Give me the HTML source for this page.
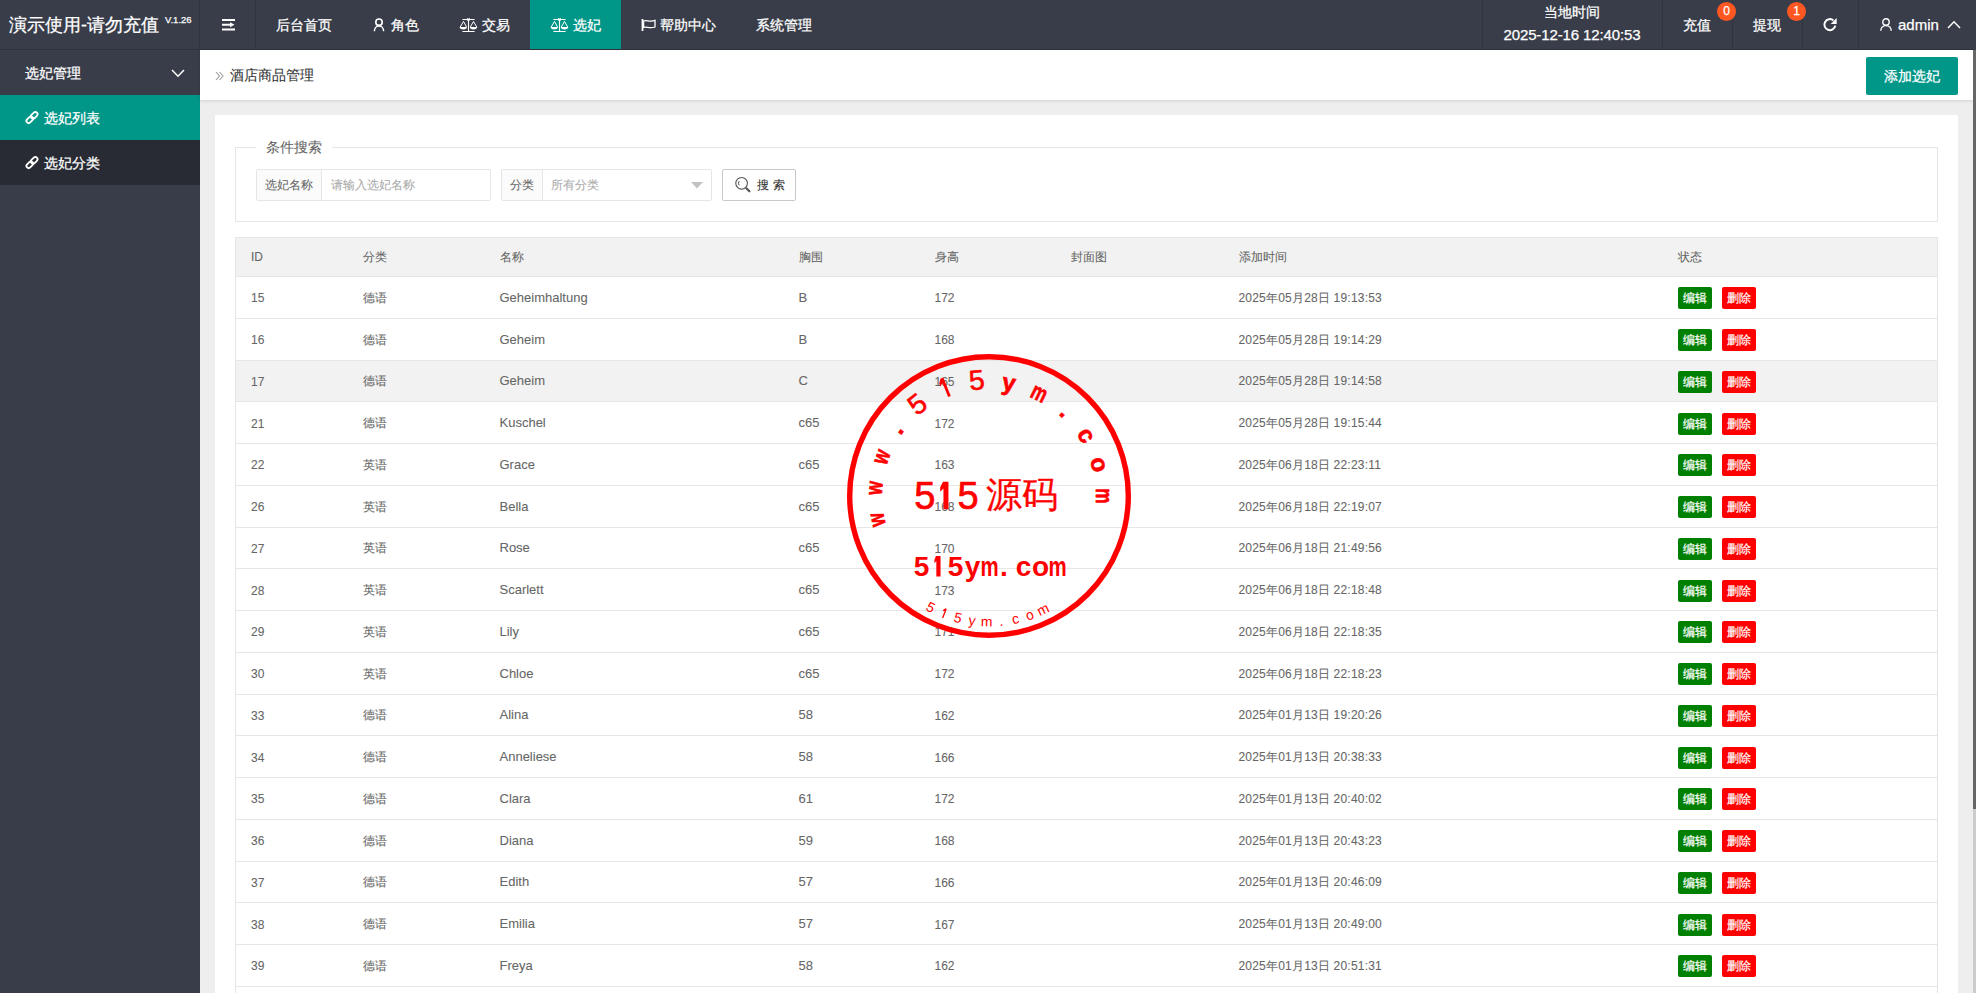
<!DOCTYPE html>
<html><head><meta charset="utf-8">
<style>
*{box-sizing:border-box}
html,body{margin:0;padding:0}
body{width:1976px;height:993px;overflow:hidden;position:relative;background:#eee;font-family:"Liberation Sans",sans-serif;color:#666}
.hdr{position:absolute;left:0;top:0;width:1976px;height:50px;background:#393D49;color:#fff}
.hdr .sep{position:absolute;top:0;width:1px;height:48px;background:#30333d}
.abs{position:absolute;white-space:nowrap}
.nav{position:absolute;top:0;height:50px;line-height:50px;font-size:14px;color:#fff;white-space:nowrap}
.nav svg{position:absolute}
.side{position:absolute;left:0;top:50px;width:200px;height:943px;background:#393D49}
.sitem{position:absolute;left:0;width:200px;height:45px;line-height:45px;font-size:14px;color:#fff}
.bread{position:absolute;left:200px;top:50px;width:1773px;height:50px;background:#fff;box-shadow:0 1px 3px rgba(0,0,0,.12)}
.card{position:absolute;left:215px;top:115px;width:1743px;height:900px;background:#fff}
.sb{position:absolute;left:1973px;top:50px;width:3px;height:943px;background:#ccc}
.sbt{position:absolute;left:1973px;top:50px;width:3px;height:759px;background:#666}
table{border-collapse:collapse;table-layout:fixed;position:absolute;left:235px;top:237px;width:1703px;font-size:12px;color:#666}
th,td{border:1px solid #e6e6e6;border-left:none;border-right:none;padding:0 0 0 15px;text-align:left;font-weight:normal;white-space:nowrap}
th{height:39px;background:#f2f2f2}
td{height:41.75px;padding-top:2px}
tr.hv td{background:#f2f2f2}
th:first-child,td:first-child{border-left:1px solid #e6e6e6;padding-left:15px}
th:last-child,td:last-child{border-right:1px solid #e6e6e6}
.lat{font-size:13px;padding-top:0}
.dt{letter-spacing:0.2px}
.btn{display:inline-block;height:22px;line-height:22px;padding:0 5px;font-size:12px;color:#fff;border-radius:2px;vertical-align:middle}
.bg{background:#008000}
.br{background:#f00;margin-left:10px}
.fs{position:absolute;left:235px;top:147px;width:1703px;height:75px;border:1px solid #e6e6e6}
.ig{position:absolute;top:169px;height:32px;border:1px solid #e6e6e6;border-radius:2px;background:#fff}
.ig .lab{position:absolute;left:0;top:0;height:30px;line-height:30px;text-align:center;background:#fbfbfb;border-right:1px solid #e6e6e6;font-size:12px;color:#666}
.ig .ph{position:absolute;top:0;line-height:30px;font-size:12px;color:#aaa}

.hdr,.side{-webkit-text-stroke:0.25px currentColor}
table,.ig,.sbtn,.lg,.bread{-webkit-text-stroke:0.08px currentColor}
.btn{-webkit-text-stroke:0.2px #fff}
.addb{-webkit-text-stroke:0.25px #fff}
.hline{position:absolute;left:0;top:49px;width:1973px;height:1px;background:#30333c}
</style></head><body>

<div class="hdr">
  <div class="abs" style="left:9px;top:0;height:50px;line-height:50px;font-size:18px;color:#fff">演示使用-请勿充值</div>
  <div class="abs" style="left:165px;top:13.5px;font-size:9.5px;color:#fff">V.1.26</div>
  <div class="sep" style="left:199px"></div>
  <svg class="abs" style="left:221px;top:18px" width="15" height="14" viewBox="0 0 15 14"><path d="M1 2h13M1 6.8h8M1 11.4h13" stroke="#fff" stroke-width="2"/><path d="M9 4.3L13.5 6.8 9 9.3z" fill="#fff"/></svg>
  <div class="sep" style="left:255px"></div>
  <div class="nav" style="left:276px">后台首页</div>
  <div class="nav" style="left:372px"><svg style="left:0;top:17px" width="14" height="16" viewBox="0 0 14 16"><circle cx="7" cy="5.2" r="3.2" fill="none" stroke="#fff" stroke-width="1.6"/><path d="M2.4 14.2c0-3 2-5.2 4.6-5.2s4.6 2.2 4.6 5.2" fill="none" stroke="#fff" stroke-width="1.5"/></svg><span style="margin-left:19px">角色</span></div>
  <div class="nav" style="left:459px"><svg style="left:-0.5px;top:18px" width="19" height="15" viewBox="0 0 19 15"><path d="M3.4 1.5h12.2M3.4 13.5h12.2M9.5 1.5v12" stroke="#fff" stroke-width="1.1" fill="none"/><circle cx="9.5" cy="1.4" r="1.3" fill="none" stroke="#fff" stroke-width="1"/><path d="M4.5 3.4L1.1 9.2M4.5 3.4L7.6 9.2M14.5 3.4L11.2 9.2M14.5 3.4L17.8 9.2" stroke="#fff" stroke-width="1" fill="none"/><path d="M0.7 9.1h7.2a3.6 2.4 0 0 1-7.2 0zM10.9 9.1h7.2a3.6 2.4 0 0 1-7.2 0z" fill="#fff"/></svg><span style="margin-left:23px">交易</span></div>
  <div class="nav" style="left:530px;width:91px;background:#009688"><svg style="left:19.5px;top:18px" width="19" height="15" viewBox="0 0 19 15"><path d="M3.4 1.5h12.2M3.4 13.5h12.2M9.5 1.5v12" stroke="#fff" stroke-width="1.1" fill="none"/><circle cx="9.5" cy="1.4" r="1.3" fill="none" stroke="#fff" stroke-width="1"/><path d="M4.5 3.4L1.1 9.2M4.5 3.4L7.6 9.2M14.5 3.4L11.2 9.2M14.5 3.4L17.8 9.2" stroke="#fff" stroke-width="1" fill="none"/><path d="M0.7 9.1h7.2a3.6 2.4 0 0 1-7.2 0zM10.9 9.1h7.2a3.6 2.4 0 0 1-7.2 0z" fill="#fff"/></svg><span style="margin-left:43px">选妃</span></div>
  <div class="nav" style="left:641px"><svg style="left:0;top:18px" width="16" height="14" viewBox="0 0 16 14"><path d="M1.5 1v12" stroke="#fff" stroke-width="1.8"/><path d="M2.6 3C5.5 1.4 8.5 4.6 14 2.4V9C8.5 11.2 5.5 8 2.6 9.3z" fill="none" stroke="#fff" stroke-width="1.3"/></svg><span style="margin-left:19px">帮助中心</span></div>
  <div class="nav" style="left:756px">系统管理</div>

  <div class="sep" style="left:1482px"></div>
  <div class="abs" style="left:1482px;width:180px;top:3px;text-align:center;font-size:14px;line-height:18px">当地时间</div>
  <div class="abs" style="left:1482px;width:180px;top:26px;text-align:center;font-size:15px;line-height:18px;letter-spacing:-0.12px">2025-12-16 12:40:53</div>
  <div class="sep" style="left:1662px"></div>
  <div class="nav" style="left:1683px">充值</div>
  <div class="sep" style="left:1732px"></div>
  <div class="nav" style="left:1753px">提现</div>
  <div class="sep" style="left:1802px"></div>
  <svg class="abs" style="left:1822px;top:16px" width="16" height="16" viewBox="0 0 16 16"><path d="M13.3 9.6A5.5 5.5 0 1 1 11.4 4.4" fill="none" stroke="#fff" stroke-width="2"/><path d="M8.7 7.9H14.7V2z" fill="#fff"/></svg>
  <div class="sep" style="left:1858px"></div>
  <svg class="abs" style="left:1880px;top:18px" width="12" height="13" viewBox="0 0 12 13"><circle cx="6" cy="4" r="3.2" fill="none" stroke="#fff" stroke-width="1.4"/><path d="M0.8 12.8c0-3 2.2-5.2 5.2-5.2s5.2 2.2 5.2 5.2" fill="none" stroke="#fff" stroke-width="1.4"/></svg>
  <div class="nav" style="left:1898px;font-size:15px">admin</div>
  <svg class="abs" style="left:1947px;top:20px" width="14" height="9" viewBox="0 0 14 9"><path d="M1 8L7 1.8 13 8" fill="none" stroke="#fff" stroke-width="1.5"/></svg>
  <div class="abs" style="left:1717px;top:1.5px;width:19px;height:19px;border-radius:50%;background:#FF5722;color:#fff;font-size:12px;line-height:19px;text-align:center">0</div>
  <div class="abs" style="left:1787px;top:1.5px;width:19px;height:19px;border-radius:50%;background:#FF5722;color:#fff;font-size:12px;line-height:19px;text-align:center">1</div>
</div>

<div class="hline"></div>
<div class="side">
  <div class="sitem" style="top:0"><span style="position:absolute;left:25px;top:0.5px">选妃管理</span><svg class="abs" style="left:171px;top:19px" width="14" height="9" viewBox="0 0 14 9"><path d="M1 1L7 7.2 13 1" fill="none" stroke="#fff" stroke-width="1.5"/></svg></div>
  <div class="sitem" style="top:45px;background:#009688"><svg class="abs" style="left:24px;top:15px" width="16" height="16" viewBox="0 0 16 16"><g fill="none" stroke="#fff" stroke-width="1.8"><rect x="-3.8" y="-2.2" width="7.6" height="4.4" rx="2.2" transform="translate(10.2,5.4) rotate(-45)"/><rect x="-3.8" y="-2.2" width="7.6" height="4.4" rx="2.2" transform="translate(5.8,9.8) rotate(-45)"/></g></svg><span style="position:absolute;left:44px;top:0.5px">选妃列表</span></div>
  <div class="sitem" style="top:90px;background:#282B33"><svg class="abs" style="left:24px;top:15px" width="16" height="16" viewBox="0 0 16 16"><g fill="none" stroke="#fff" stroke-width="1.8"><rect x="-3.8" y="-2.2" width="7.6" height="4.4" rx="2.2" transform="translate(10.2,5.4) rotate(-45)"/><rect x="-3.8" y="-2.2" width="7.6" height="4.4" rx="2.2" transform="translate(5.8,9.8) rotate(-45)"/></g></svg><span style="position:absolute;left:44px;top:0.5px">选妃分类</span></div>
</div>

<div class="bread">
  <svg class="abs" style="left:15px;top:21px" width="9" height="10" viewBox="0 0 9 10"><path d="M1 1l3.5 4L1 9M4.5 1L8 5 4.5 9" fill="none" stroke="#999" stroke-width="1.1"/></svg>
  <div class="abs" style="left:30px;top:0;line-height:50px;font-size:14px;color:#333">酒店商品管理</div>
  <div class="abs addb" style="left:1666px;top:7px;width:92px;height:38px;line-height:38px;text-align:center;background:#009688;color:#fff;font-size:14px;border-radius:2px">添加选妃</div>
</div>


<div class="card"></div>
<div class="fs"></div>
<div class="abs lg" style="left:256px;top:139px;width:76px;height:16px;background:#fff;line-height:16px;font-size:14px;color:#666;padding-left:10px">条件搜索</div>
<div class="ig" style="left:256px;width:235px"><div class="lab" style="width:65px">选妃名称</div><div class="ph" style="left:74px">请输入选妃名称</div></div>
<div class="ig" style="left:501px;width:211px"><div class="lab" style="width:41px">分类</div><div class="ph" style="left:49px">所有分类</div><svg class="abs" style="left:188.5px;top:12px" width="12" height="7" viewBox="0 0 12 7"><path d="M0 0h12L6 6.5z" fill="#c2c2c2"/></svg></div>
<div class="abs sbtn" style="left:722px;top:169px;width:74px;height:32px;border:1px solid #c9c9c9;border-radius:2px;background:#fff"><svg class="abs" style="left:9.5px;top:4.5px" width="20" height="20" viewBox="0 0 20 20"><circle cx="8.6" cy="8.3" r="5.8" fill="none" stroke="#555" stroke-width="1.1"/><path d="M6.2 6.1A3.5 3.5 0 0 0 6.2 10.4" fill="none" stroke="#555" stroke-width="1"/><path d="M13.3 13.3L16.4 16.3" stroke="#555" stroke-width="2.2" stroke-linecap="round"/></svg><div class="abs" style="left:34px;top:0;line-height:30px;font-size:12px;color:#333;letter-spacing:4px">搜索</div></div>
<table><colgroup><col style="width:112px"><col style="width:137px"><col style="width:299px"><col style="width:136px"><col style="width:136px"><col style="width:168px"><col style="width:439px"><col></colgroup>
<tr><th>ID</th><th>分类</th><th>名称</th><th>胸围</th><th>身高</th><th>封面图</th><th>添加时间</th><th>状态</th></tr>
<tr><td>15</td><td>德语</td><td class="lat">Geheimhaltung</td><td class="lat">B</td><td>172</td><td></td><td class="dt">2025年05月28日 19:13:53</td><td><span class="btn bg">编辑</span><span class="btn br">删除</span></td></tr>
<tr><td>16</td><td>德语</td><td class="lat">Geheim</td><td class="lat">B</td><td>168</td><td></td><td class="dt">2025年05月28日 19:14:29</td><td><span class="btn bg">编辑</span><span class="btn br">删除</span></td></tr>
<tr class="hv"><td>17</td><td>德语</td><td class="lat">Geheim</td><td class="lat">C</td><td>165</td><td></td><td class="dt">2025年05月28日 19:14:58</td><td><span class="btn bg">编辑</span><span class="btn br">删除</span></td></tr>
<tr><td>21</td><td>德语</td><td class="lat">Kuschel</td><td class="lat">c65</td><td>172</td><td></td><td class="dt">2025年05月28日 19:15:44</td><td><span class="btn bg">编辑</span><span class="btn br">删除</span></td></tr>
<tr><td>22</td><td>英语</td><td class="lat">Grace</td><td class="lat">c65</td><td>163</td><td></td><td class="dt">2025年06月18日 22:23:11</td><td><span class="btn bg">编辑</span><span class="btn br">删除</span></td></tr>
<tr><td>26</td><td>英语</td><td class="lat">Bella</td><td class="lat">c65</td><td>168</td><td></td><td class="dt">2025年06月18日 22:19:07</td><td><span class="btn bg">编辑</span><span class="btn br">删除</span></td></tr>
<tr><td>27</td><td>英语</td><td class="lat">Rose</td><td class="lat">c65</td><td>170</td><td></td><td class="dt">2025年06月18日 21:49:56</td><td><span class="btn bg">编辑</span><span class="btn br">删除</span></td></tr>
<tr><td>28</td><td>英语</td><td class="lat">Scarlett</td><td class="lat">c65</td><td>173</td><td></td><td class="dt">2025年06月18日 22:18:48</td><td><span class="btn bg">编辑</span><span class="btn br">删除</span></td></tr>
<tr><td>29</td><td>英语</td><td class="lat">Lily</td><td class="lat">c65</td><td>171</td><td></td><td class="dt">2025年06月18日 22:18:35</td><td><span class="btn bg">编辑</span><span class="btn br">删除</span></td></tr>
<tr><td>30</td><td>英语</td><td class="lat">Chloe</td><td class="lat">c65</td><td>172</td><td></td><td class="dt">2025年06月18日 22:18:23</td><td><span class="btn bg">编辑</span><span class="btn br">删除</span></td></tr>
<tr><td>33</td><td>德语</td><td class="lat">Alina</td><td class="lat">58</td><td>162</td><td></td><td class="dt">2025年01月13日 19:20:26</td><td><span class="btn bg">编辑</span><span class="btn br">删除</span></td></tr>
<tr><td>34</td><td>德语</td><td class="lat">Anneliese</td><td class="lat">58</td><td>166</td><td></td><td class="dt">2025年01月13日 20:38:33</td><td><span class="btn bg">编辑</span><span class="btn br">删除</span></td></tr>
<tr><td>35</td><td>德语</td><td class="lat">Clara</td><td class="lat">61</td><td>172</td><td></td><td class="dt">2025年01月13日 20:40:02</td><td><span class="btn bg">编辑</span><span class="btn br">删除</span></td></tr>
<tr><td>36</td><td>德语</td><td class="lat">Diana</td><td class="lat">59</td><td>168</td><td></td><td class="dt">2025年01月13日 20:43:23</td><td><span class="btn bg">编辑</span><span class="btn br">删除</span></td></tr>
<tr><td>37</td><td>德语</td><td class="lat">Edith</td><td class="lat">57</td><td>166</td><td></td><td class="dt">2025年01月13日 20:46:09</td><td><span class="btn bg">编辑</span><span class="btn br">删除</span></td></tr>
<tr><td>38</td><td>德语</td><td class="lat">Emilia</td><td class="lat">57</td><td>167</td><td></td><td class="dt">2025年01月13日 20:49:00</td><td><span class="btn bg">编辑</span><span class="btn br">删除</span></td></tr>
<tr><td>39</td><td>德语</td><td class="lat">Freya</td><td class="lat">58</td><td>162</td><td></td><td class="dt">2025年01月13日 20:51:31</td><td><span class="btn bg">编辑</span><span class="btn br">删除</span></td></tr>
<tr><td>40</td><td>德语</td><td class="lat">Greta</td><td class="lat">58</td><td>165</td><td></td><td class="dt">2025年01月13日 20:53:31</td><td><span class="btn bg">编辑</span><span class="btn br">删除</span></td></tr>
</table>

<svg class="abs stamp" style="left:838.5px;top:346.3px" width="300" height="300" viewBox="0 0 300 300" fill="#f00" font-family="Liberation Sans,sans-serif"><circle cx="150" cy="150" r="139.3" fill="none" stroke="#f00" stroke-width="5.4"/><text transform="translate(45.34,172.25) rotate(-102.00) scale(0.72,1)" text-anchor="middle" font-size="24" font-weight="bold" stroke="#f00" stroke-width="0.7">w</text><text transform="translate(43.26,142.54) rotate(-86.00) scale(0.72,1)" text-anchor="middle" font-size="24" font-weight="bold" stroke="#f00" stroke-width="0.7">w</text><text transform="translate(49.45,113.40) rotate(-70.00) scale(0.72,1)" text-anchor="middle" font-size="24" font-weight="bold" stroke="#f00" stroke-width="0.7">w</text><text transform="translate(63.44,87.11) rotate(-54.00) scale(1.0,1)" text-anchor="middle" font-size="24" font-weight="bold" stroke="#f00" stroke-width="0.7">.</text><text transform="translate(84.12,65.68) rotate(-38.00) scale(1.0,1)" text-anchor="middle" font-size="28" stroke="#f00" stroke-width="0.6">5</text><path transform="translate(109.92,50.79) rotate(-22.00) scale(1.0,1)" d="M2.00 -20.00 L2.00 0.00 L-0.80 0.00 L-0.80 -15.20 L-4.00 -12.80 L-4.00 -16.00 L-1.08 -20.00Z" fill="#f00"/><text transform="translate(138.82,43.59) rotate(-6.00) scale(1.0,1)" text-anchor="middle" font-size="28" stroke="#f00" stroke-width="0.6">5</text><text transform="translate(168.58,44.63) rotate(10.00) scale(1.0,1)" text-anchor="middle" font-size="24" font-weight="bold" stroke="#f00" stroke-width="0.7">y</text><text transform="translate(196.91,53.83) rotate(26.00) scale(0.72,1)" text-anchor="middle" font-size="24" font-weight="bold" stroke="#f00" stroke-width="0.7">m</text><text transform="translate(221.60,70.48) rotate(42.00) scale(1.0,1)" text-anchor="middle" font-size="24" font-weight="bold" stroke="#f00" stroke-width="0.7">.</text><text transform="translate(240.74,93.30) rotate(58.00) scale(1.0,1)" text-anchor="middle" font-size="24" font-weight="bold" stroke="#f00" stroke-width="0.7">c</text><text transform="translate(252.86,120.51) rotate(74.00) scale(1.0,1)" text-anchor="middle" font-size="24" font-weight="bold" stroke="#f00" stroke-width="0.7">o</text><text transform="translate(257.00,150.00) rotate(90.00) scale(0.72,1)" text-anchor="middle" font-size="24" font-weight="bold" stroke="#f00" stroke-width="0.7">m</text><text transform="translate(89.54,265.65) rotate(27.60)" text-anchor="middle" font-size="14">5</text><path transform="translate(103.30,271.86) rotate(20.97)" d="M1.00 -10.00 L1.00 0.00 L-0.30 0.00 L-0.30 -7.60 L-2.00 -6.40 L-2.00 -8.00 L-0.43 -10.00Z" fill="#f00"/><text transform="translate(117.68,276.43) rotate(14.34)" text-anchor="middle" font-size="14">5</text><text transform="translate(132.49,279.32) rotate(7.71)" text-anchor="middle" font-size="14">y</text><text transform="translate(147.54,280.48) rotate(1.08)" text-anchor="middle" font-size="14">m</text><text transform="translate(162.62,279.89) rotate(-5.55)" text-anchor="middle" font-size="14">.</text><text transform="translate(177.53,277.56) rotate(-12.18)" text-anchor="middle" font-size="14">c</text><text transform="translate(192.08,273.53) rotate(-18.81)" text-anchor="middle" font-size="14">o</text><text transform="translate(206.06,267.85) rotate(-25.44)" text-anchor="middle" font-size="14">m</text><text x="75.2" y="163.3" font-size="38" stroke="#f00" stroke-width="0.7">5</text><path transform="translate(106.7,163.3)" d="M2.75 -27.50 L2.75 0.00 L-2.25 0.00 L-2.25 -20.90 L-5.50 -17.60 L-5.50 -22.00 L-2.75 -27.50Z" fill="#f00"/><text x="118.6" y="163.3" font-size="38" stroke="#f00" stroke-width="0.7">5</text><text x="147.4" y="160.7" font-size="36" font-family="Liberation Serif,serif" stroke="#f00" stroke-width="0.3">源码</text><text transform="translate(82.5,230.4) scale(1.0,1)" text-anchor="middle" font-size="28" font-weight="bold">5</text><path transform="translate(99.5,230.4) scale(1.0,1)" d="M2.04 -20.40 L2.04 0.00 L-2.16 0.00 L-2.16 -15.50 L-4.08 -13.06 L-4.08 -16.32 L-2.58 -20.40Z" fill="#f00"/><text transform="translate(116.5,230.4) scale(1.0,1)" text-anchor="middle" font-size="28" font-weight="bold">5</text><text transform="translate(133.5,230.4) scale(1.0,1)" text-anchor="middle" font-size="28" font-weight="bold">y</text><text transform="translate(150.5,230.4) scale(0.73,1)" text-anchor="middle" font-size="28" font-weight="bold">m</text><text transform="translate(164.8,230.4) scale(1.0,1)" text-anchor="middle" font-size="28" font-weight="bold">.</text><text transform="translate(184.5,230.4) scale(1.0,1)" text-anchor="middle" font-size="28" font-weight="bold">c</text><text transform="translate(201.5,230.4) scale(1.0,1)" text-anchor="middle" font-size="28" font-weight="bold">o</text><text transform="translate(218.5,230.4) scale(0.73,1)" text-anchor="middle" font-size="28" font-weight="bold">m</text></svg>
<div class="sb"></div><div class="sbt"></div>

</body></html>
